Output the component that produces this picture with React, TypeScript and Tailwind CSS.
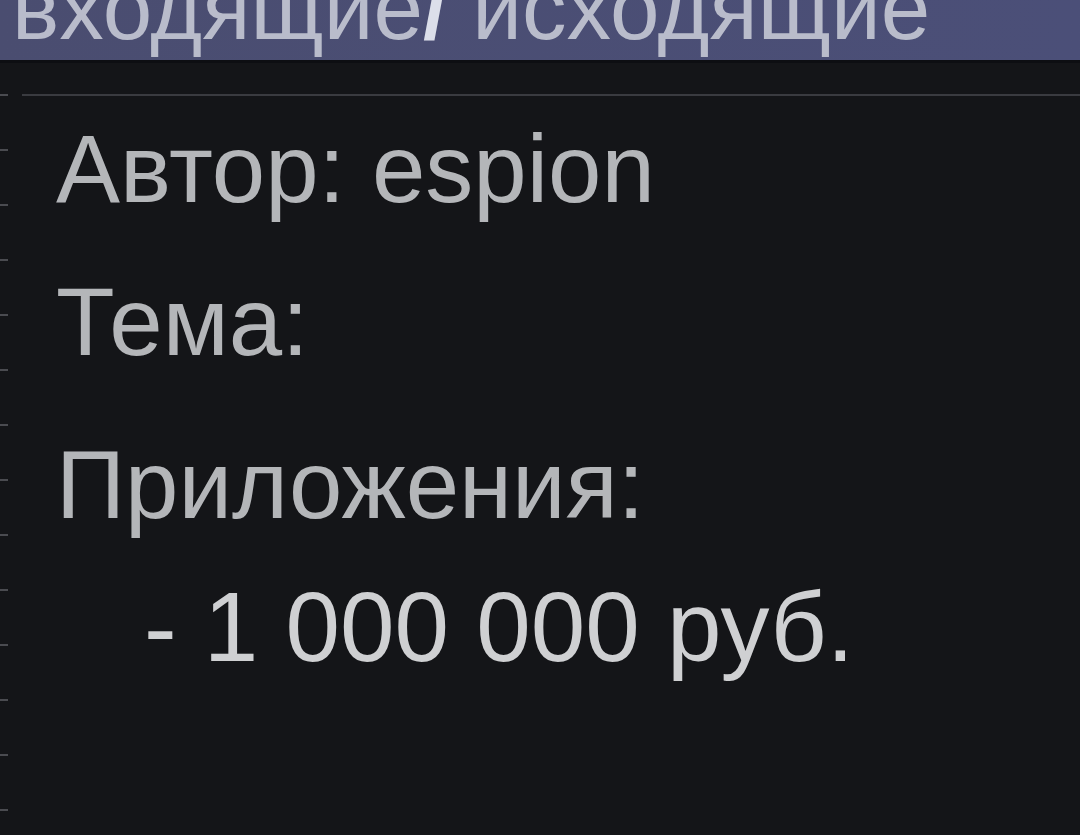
import React from "react";

const ticks = Array.from({ length: 14 }, (_, i) => i);

export default function App() {
  return (
    <div
      className="w-[1080px] h-[835px] overflow-hidden bg-[#141518] flex flex-col"
      style={{ fontFamily: '"Liberation Sans", Arial, sans-serif' }}
    >
      <div className="h-[60px] shrink-0 bg-gradient-to-r from-[#4a4d70] to-[#4b4f78] overflow-hidden relative">
        <div className="absolute left-[12px] bottom-[7px] text-[89px] leading-none text-[#b9bccb] whitespace-nowrap">
          входящие<span className="font-bold text-[#dcdfea]">/</span>&nbsp;исходящие
        </div>
      </div>
      <div className="h-[3px] bg-[#0d0e12] shrink-0" />
      <div className="flex flex-1">
        <div className="w-[22px] shrink-0 pt-[31px] flex flex-col gap-[53px]">
          {ticks.map((t) => (
            <div key={t} className="w-[8px] h-[2px] bg-[#4a4b50]" />
          ))}
        </div>
        <div className="flex-1 flex flex-col">
          <div className="mt-[31px] h-[2px] bg-[#3a3b40]" />
          <div className="pl-[34px] text-[96px] leading-none text-[#b4b6b9]">
            <div className="mt-[25px]">Автор: espion</div>
            <div className="mt-[57px]">Тема:</div>
            <div className="mt-[67px]">Приложения:</div>
            <div className="mt-[45px] pl-[88px] text-[98px] text-[#cfd0d2]">- 1 000 000 руб.</div>
          </div>
        </div>
      </div>
    </div>
  );
}
